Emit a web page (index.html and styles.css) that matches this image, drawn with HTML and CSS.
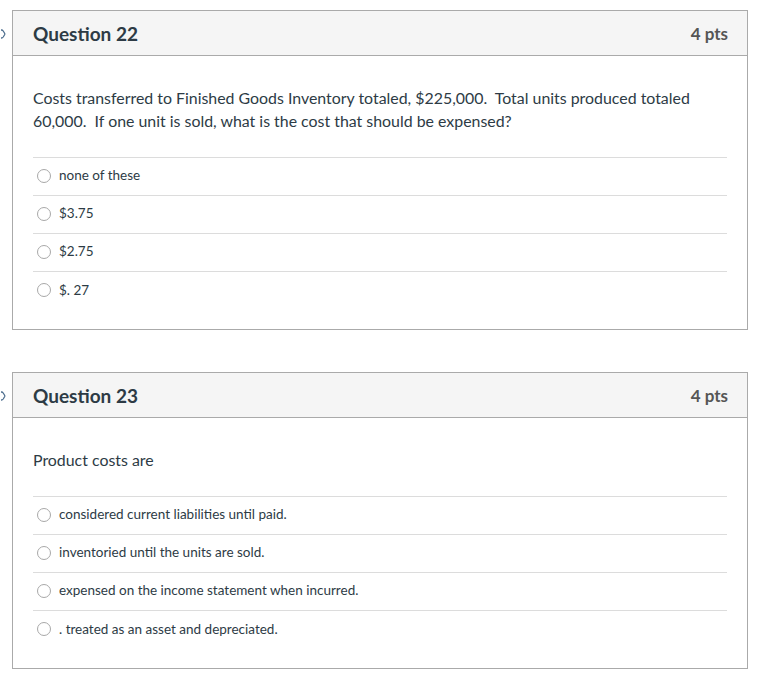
FILE: index.html
```html
<!DOCTYPE html>
<html>
<head>
<meta charset="utf-8">
<link rel="stylesheet" href="styles.css">
</head>
<body>
<div class="page">
  <div class="question">
    <svg class="flag" width="6" height="12" viewBox="0 0 6 12"><path d="M-3 2 L0.5 2 Q1.5 2 2.2 3 L3.6 5.2 Q4 6 3.6 6.8 L2.2 9 Q1.5 10 0.5 10 L-3 10" fill="none" stroke="#4f6f8f" stroke-width="1.3"/></svg>
    <div class="q-header">
      <span class="q-title">Question 22</span>
      <span class="q-pts">4 pts</span>
    </div>
    <div class="q-body">
      <p class="q-text">Costs transferred to Finished Goods Inventory totaled, $225,000.&nbsp; Total units produced totaled 60,000.&nbsp; If one unit is sold, what is the cost that should be expensed?</p>
      <div class="answers">
        <div class="answer"><span class="radio"></span><span class="label">none of these</span></div>
        <div class="answer"><span class="radio"></span><span class="label">$3.75</span></div>
        <div class="answer"><span class="radio"></span><span class="label">$2.75</span></div>
        <div class="answer"><span class="radio"></span><span class="label">$. 27</span></div>
      </div>
    </div>
  </div>
  <div class="question">
    <svg class="flag" width="6" height="12" viewBox="0 0 6 12"><path d="M-3 2 L0.5 2 Q1.5 2 2.2 3 L3.6 5.2 Q4 6 3.6 6.8 L2.2 9 Q1.5 10 0.5 10 L-3 10" fill="none" stroke="#4f6f8f" stroke-width="1.3"/></svg>
    <div class="q-header">
      <span class="q-title">Question 23</span>
      <span class="q-pts">4 pts</span>
    </div>
    <div class="q-body">
      <p class="q-text">Product costs are</p>
      <div class="answers">
        <div class="answer"><span class="radio"></span><span class="label">considered current liabilities until paid.</span></div>
        <div class="answer"><span class="radio"></span><span class="label">inventoried until the units are sold.</span></div>
        <div class="answer"><span class="radio"></span><span class="label">expensed on the income statement when incurred.</span></div>
        <div class="answer"><span class="radio"></span><span class="label">. treated as an asset and depreciated.</span></div>
      </div>
    </div>
  </div>
</div>
</body>
</html>
```
FILE: styles.css
```css
* { box-sizing: border-box; }
body {
  margin: 0;
  background: #fff;
  font-family: Lato, "Liberation Sans", sans-serif;
  color: #2d3b45;
}
.page {
  padding: 10px 0 0 12px;
  width: 748px;
}
.question {
  position: relative;
  border: 1px solid #aaaaaa;
  margin-bottom: 42px;
}
.question:last-child { margin-bottom: 0; }
.flag {
  position: absolute;
  left: -12px;
  top: 17px;
}
.q-header {
  display: flex;
  justify-content: space-between;
  align-items: center;
  height: 45px;
  padding: 0 19px 0 20px;
  background: #f5f5f5;
  border-bottom: 1px solid #aaaaaa;
}
.q-title {
  font-size: 19px;
  font-weight: 700;
  color: #2d3b45;
}
.q-pts {
  font-size: 17px;
  font-weight: 700;
  color: #555;
}
.q-body {
  padding: 30px 20px 19px 20px;
}
.q-text {
  margin: 0 0 25px 0;
  font-size: 15.9px;
  line-height: 23px;
  padding-right: 30px;
}
.answers {
  border-top: 1px solid #dcdcdc;
}
.answer {
  display: flex;
  align-items: center;
  height: 38px;
  border-bottom: 1px solid #dcdcdc;
  padding-left: 4px;
  padding-bottom: 3px;
}
.answer:last-child { border-bottom: none; }
.radio {
  width: 14px;
  height: 14px;
  border: 1px solid #a8a8a8;
  border-radius: 50%;
  background: #fff;
  margin-right: 8px;
  margin-top: 1px;
  flex: none;
}
.label {
  font-size: 13.5px;
}
```
